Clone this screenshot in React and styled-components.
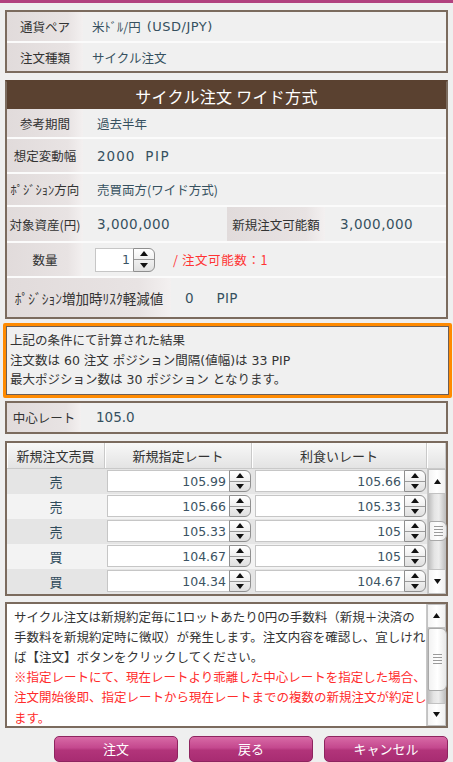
import React from 'react';
import styled, { createGlobalStyle } from 'styled-components';

const GlobalStyle = createGlobalStyle`
  html, body { margin: 0; padding: 0; background: #efefef; }
  body {
    font-family: "Noto Sans CJK JP", "Noto Sans", sans-serif;
    font-size: 12.5px;
    color: #333;
  }
  * { box-sizing: border-box; }
`;

const Page = styled.div`
  width: 453px;
  height: 762px;
  overflow: hidden;
  display: flex;
  flex-direction: column;
  padding: 0 5px;
`;

const TopBar = styled.div`
  height: 3px;
  margin: 0 -5px 7px;
  background: #b2427f;
  flex: none;
`;

const Panel = styled.section`
  border: 2px solid #7b6b5e;
  border-top-color: ${p => (p.$dark ? '#5a4130' : '#7b6b5e')};
  background: #f0f0f0;
  margin-top: ${p => p.$mt ?? 0}px;
  flex: none;
`;

const Header = styled.div`
  height: 27px;
  background: #5a4130;
  color: #fff;
  font-size: 16px;
  display: flex;
  align-items: center;
  justify-content: center;
  letter-spacing: 0.3px;
`;

const Row = styled.div`
  box-sizing: content-box;
  display: flex;
  align-items: stretch;
  height: ${p => p.$h}px;
  & + & { border-top: 2px solid #fbfbfb; }
`;

const Label = styled.div`
  width: ${p => p.$w ?? 76}px;
  flex: none;
  display: flex;
  align-items: center;
  justify-content: center;
  white-space: nowrap;
  font-size: ${p => p.$fs ?? 12.5}px;
  color: #333;
  background: linear-gradient(90deg, #e1dbdb 0%, #e8e3e3 80%, #f3f0f0 100%);
`;

const Value = styled.div`
  display: flex;
  align-items: center;
  padding-left: ${p => p.$pl ?? 14}px;
  width: ${p => (p.$w ? `${p.$w}px` : 'auto')};
  flex: ${p => (p.$w ? 'none' : '1')};
  color: #36505f;
  white-space: nowrap;
`;

const Num = styled.span`
  font-family: "DejaVu Sans", "Noto Sans CJK JP", sans-serif;
  font-size: ${p => p.$fs ?? 13.5}px;
  letter-spacing: ${p => p.$ls ?? 0.5}px;
  margin-left: ${p => p.$ml ?? 0}px;
  color: #36505f;
`;

const RedNote = styled.span`
  margin-left: 18px;
  color: #ff3333;
  font-size: 12.5px;
  letter-spacing: 0.6px;
`;

const SpinWrap = styled.div`
  display: flex;
  height: ${p => p.$h}px;
  width: ${p => (p.$w ? `${p.$w}px` : 'auto')};
  flex: ${p => (p.$w ? 'none' : '1')};
`;

const NumInput = styled.div`
  flex: 1;
  background: #fff;
  border: 1px solid #c6c6c6;
  border-right: none;
  display: flex;
  align-items: center;
  justify-content: flex-end;
  padding-right: 3px;
  font-family: "DejaVu Sans", sans-serif;
  font-size: 12.5px;
  color: #3b5363;
`;

const SpinBtns = styled.div`
  width: 22px;
  flex: none;
  display: flex;
  flex-direction: column;
  border: 1px solid #8f8f8f;
  border-radius: 0 6px 6px 0;
  background: linear-gradient(#ffffff, #e0e0e0);
  overflow: hidden;
`;

const SpinHalf = styled.div`
  flex: 1;
  display: flex;
  align-items: center;
  justify-content: center;
  & + & { border-top: 1px solid #9a9a9a; }
`;

const Tri = ({ up, w = 8, h = 5 }) => (
  <svg width={w} height={h} viewBox={`0 0 ${w} ${h}`}>
    <polygon
      points={up ? `0,${h} ${w / 2},0 ${w},${h}` : `0,0 ${w},0 ${w / 2},${h}`}
      fill="#111"
    />
  </svg>
);

const Spinner = ({ value, h = 22, w }) => (
  <SpinWrap $h={h} $w={w}>
    <NumInput>{value}</NumInput>
    <SpinBtns>
      <SpinHalf><Tri up /></SpinHalf>
      <SpinHalf><Tri /></SpinHalf>
    </SpinBtns>
  </SpinWrap>
);

const ResultBox = styled.div`
  margin: 4px -4px 0 -2px;
  border: 3px solid #ff8a00;
  border-radius: 2px;
  flex: none;
`;

const ResultInner = styled.div`
  border: 1px solid #6d5e55;
  background: #f0f0f0;
  padding: 4px 2px 4px 3px;
  line-height: 19.5px;
  font-family: "DejaVu Sans", "Noto Sans CJK JP", sans-serif;
  font-size: 12.5px;
  color: #333;
  white-space: nowrap;
`;

const Grid = styled.div`
  display: grid;
  grid-template-columns: 98px 147px 175px 1fr;
  grid-template-rows: 26px repeat(5, 25px);
`;

const HeadCell = styled.div`
  display: flex;
  align-items: center;
  justify-content: center;
  background: linear-gradient(#f8f8f8, #e3e3e3);
  border-right: 1px solid #c9c9c9;
  border-bottom: 1px solid #c9c9c9;
  box-shadow: inset 1px 0 #ffffff;
  font-size: 13px;
  color: #333;
`;

const SideCell = styled.div`
  display: flex;
  align-items: center;
  justify-content: center;
  background: ${p => (p.$odd ? '#e5e5e5' : '#f3f3f3')};
  color: #2e4a5a;
  font-size: 13px;
`;

const RateCell = styled.div`
  display: flex;
  align-items: center;
  padding: 0 ${p => p.$pr}px 0 ${p => p.$pl}px;
  background: ${p => (p.$odd ? '#e5e5e5' : '#f3f3f3')};
`;

const ScrollCol = styled.div`
  display: flex;
  flex-direction: column;
  width: ${p => p.$w ?? 19}px;
  grid-column: 4;
  grid-row: ${p => p.$row ?? 'auto'};
  border-left: 1px solid #c8c8c8;
  flex: none;
`;

const ArrowBtn = styled.div`
  height: ${p => p.$h}px;
  flex: none;
  display: flex;
  align-items: center;
  justify-content: center;
  background: linear-gradient(90deg, #f4f4f4, #ffffff 50%, #f0f0f0);
  border: 1px solid #c2c2c2;
`;

const Track = styled.div`
  flex: 1;
  display: flex;
  flex-direction: column;
  background: linear-gradient(90deg, #b9b9b9, #e4e4e4 35%, #ededed 60%, #bcbcbc);
`;

const Thumb = styled.div`
  margin-top: ${p => p.$top}px;
  height: ${p => p.$h}px;
  margin-left: 1px;
  margin-right: -1px;
  border: 1px solid #a9a9a9;
  border-radius: 2px 6px 6px 2px;
  background: linear-gradient(90deg, #f2f2f2, #ffffff 50%, #e8e8e8);
  display: flex;
  flex-direction: column;
  align-items: center;
  justify-content: center;
  gap: 2px;
`;

const Grip = styled.div`
  width: 9px;
  height: 1px;
  background: #9a9a9a;
`;

const Scrollbar = ({ up, down, top, h, row, w }) => (
  <ScrollCol $row={row} $w={w}>
    <ArrowBtn $h={up}><Tri up w={7} h={5} /></ArrowBtn>
    <Track>
      <Thumb $top={top} $h={h}>
        <Grip /><Grip /><Grip /><Grip />
      </Thumb>
    </Track>
    <ArrowBtn $h={down}><Tri w={7} h={5} /></ArrowBtn>
  </ScrollCol>
);

const NoticeBox = styled.div`
  margin-top: 6px;
  height: 126px;
  flex: none;
  border: 2px solid #7b6b5e;
  background: #fff;
  display: flex;
`;

const NoticeText = styled.div`
  flex: 1;
  overflow: hidden;
  padding: 3px 0 0 7px;
  line-height: 20.2px;
  font-size: 12.5px;
  color: #333;
  white-space: nowrap;
`;

const Line = styled.div`
  color: ${p => (p.$red ? '#ff2b2b' : '#333')};
`;

const ButtonRow = styled.div`
  margin-top: 8px;
  display: flex;
  justify-content: flex-end;
  gap: 11px;
  flex: none;
`;

const Button = styled.button`
  width: 124px;
  height: 26px;
  border: 1px solid #8e245f;
  border-radius: 5px;
  background: linear-gradient(#d86aa6 0%, #c4488e 45%, #b2347a 55%, #a82c72 100%);
  color: #fff;
  font-family: "Noto Sans CJK JP", sans-serif;
  font-size: 13px;
  padding: 0;
  cursor: pointer;
`;

const rows = [
  ['売', '105.99', '105.66'],
  ['売', '105.66', '105.33'],
  ['売', '105.33', '105'],
  ['買', '104.67', '105'],
  ['買', '104.34', '104.67'],
];

export default function App() {
  return (
    <>
      <GlobalStyle />
      <Page>
        <TopBar />
        <Panel>
          <Row $h={29}>
            <Label>通貨ペア</Label>
            <Value $pl={9}>米ﾄﾞﾙ/円<Num $ml={6} $fs={13}>(USD/JPY)</Num></Value>
          </Row>
          <Row $h={28}>
            <Label>注文種類</Label>
            <Value $pl={9}>サイクル注文</Value>
          </Row>
        </Panel>

        <Panel $mt={7} $dark>
          <Header>サイクル注文 ワイド方式</Header>
          <Row $h={28}>
            <Label>参考期間</Label>
            <Value>過去半年</Value>
          </Row>
          <Row $h={33}>
            <Label>想定変動幅</Label>
            <Value>
              <Num $ls={1}>2000</Num>
              <Num $ml={10} $ls={1.5}>PIP</Num>
            </Value>
          </Row>
          <Row $h={31}>
            <Label>ﾎﾟｼﾞｼｮﾝ方向</Label>
            <Value>売買両方(ワイド方式)</Value>
          </Row>
          <Row $h={34}>
            <Label>対象資産(円)</Label>
            <Value $w={144}><Num>3,000,000</Num></Value>
            <Label $w={98}>新規注文可能額</Label>
            <Value $pl={15}><Num>3,000,000</Num></Value>
          </Row>
          <Row $h={33}>
            <Label>数量</Label>
            <Value $pl={12}>
              <Spinner value="1" w={60} h={24} />
              <RedNote>/ 注文可能数：1</RedNote>
            </Value>
          </Row>
          <Row $h={39}>
            <Label $w={164} $fs={13.5}>ﾎﾟｼﾞｼｮﾝ増加時ﾘｽｸ軽減値</Label>
            <Value>
              <Num $ls={0}>0</Num>
              <Num $ml={23} $ls={0.3}>PIP</Num>
            </Value>
          </Row>
        </Panel>

        <ResultBox>
          <ResultInner>
            <div>上記の条件にて計算された結果</div>
            <div>注文数は 60 注文 ポジション間隔(値幅)は 33 PIP</div>
            <div>最大ポジション数は 30 ポジション となります。</div>
          </ResultInner>
        </ResultBox>

        <Panel $mt={3}>
          <Row $h={29}>
            <Label $w={74}>中心レート</Label>
            <Value $pl={15}><Num $ls={0}>105.0</Num></Value>
          </Row>
        </Panel>

        <Panel $mt={7}>
          <Grid>
            <HeadCell>新規注文売買</HeadCell>
            <HeadCell>新規指定レート</HeadCell>
            <HeadCell>利食いレート</HeadCell>
            <HeadCell />
            {rows.map(([side, rate, tp], i) => (
              <React.Fragment key={i}>
                <SideCell $odd={i % 2 === 0} style={{ gridRow: i + 2, gridColumn: 1 }}>{side}</SideCell>
                <RateCell $odd={i % 2 === 0} $pl={2} $pr={1} style={{ gridRow: i + 2, gridColumn: 2 }}>
                  <Spinner value={rate} h={22} />
                </RateCell>
                <RateCell $odd={i % 2 === 0} $pl={3} $pr={1} style={{ gridRow: i + 2, gridColumn: 3 }}>
                  <Spinner value={tp} h={22} />
                </RateCell>
              </React.Fragment>
            ))}
            <Scrollbar row="2 / span 5" up={25} down={25} top={27} h={20} />
          </Grid>
        </Panel>

        <NoticeBox>
          <NoticeText>
            <Line>サイクル注文は新規約定毎に1ロットあたり0円の手数料（新規＋決済の</Line>
            <Line>手数料を新規約定時に徴収）が発生します。注文内容を確認し、宜しけれ</Line>
            <Line>ば【注文】ボタンをクリックしてください。</Line>
            <Line $red>※指定レートにて、現在レートより乖離した中心レートを指定した場合、</Line>
            <Line $red>注文開始後即、指定レートから現在レートまでの複数の新規注文が約定し</Line>
            <Line $red>ます。</Line>
          </NoticeText>
          <Scrollbar w={20} up={24} down={23} top={0} h={63} />
        </NoticeBox>

        <ButtonRow>
          <Button>注文</Button>
          <Button>戻る</Button>
          <Button>キャンセル</Button>
        </ButtonRow>
      </Page>
    </>
  );
}
